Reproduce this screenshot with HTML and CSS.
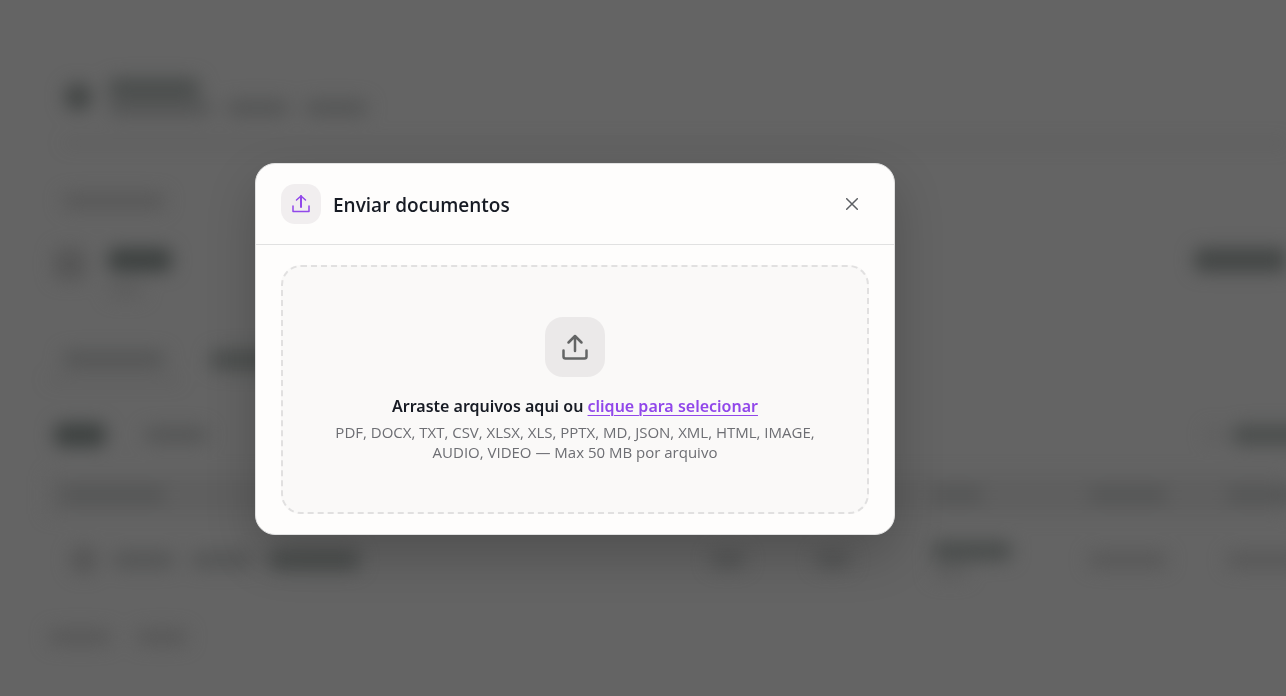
FILE: index.html
```html
<!DOCTYPE html>
<html lang="pt-BR">
<head>
<meta charset="utf-8">
<meta name="viewport" content="width=device-width, initial-scale=1">
<title>Enviar documentos</title>
<link rel="stylesheet" href="styles.css">
</head>
<body>
<div class="page" aria-hidden="true">
  <div class="page-header">
    <span class="dot dot-strong"></span>
    <div class="stack">
      <span class="bar strong w-90"></span>
      <div class="line"><span class="bar w-100"></span><span class="bar w-60"></span><span class="bar w-60"></span></div>
    </div>
  </div>
  <div class="crumbs"><span class="bar soft w-100"></span></div>
  <div class="heading">
    <span class="dot dot-large"></span>
    <div class="stack">
      <span class="bar darkest w-60"></span>
      <span class="bar faint w-36"></span>
    </div>
    <span class="action"></span>
  </div>
  <div class="tabs">
    <span class="tab"><span class="bar w-100"></span></span>
    <span class="bar strong w-90"></span>
  </div>
  <div class="filters">
    <span class="bar darkest w-48"></span>
    <span class="bar w-60"></span>
    <span class="search"><span class="bar faint w-16"></span><span class="bar strong w-90"></span></span>
  </div>
  <div class="table-row table-head">
    <span class="bar w-100"></span><span></span><span></span>
    <span class="bar w-48"></span><span class="bar w-80"></span><span class="bar w-80"></span>
  </div>
  <div class="table-row">
    <div class="line file"><span class="dot"></span><span class="bar w-60"></span><span class="bar w-60"></span><span class="bar strong w-90"></span></div>
    <span class="bar w-36"></span>
    <span class="bar w-36"></span>
    <div class="stack"><span class="bar strong w-80"></span><span class="bar faint w-36"></span></div>
    <span class="bar soft w-80"></span>
    <span class="bar soft w-80"></span>
  </div>
  <div class="footer"><span class="bar soft w-60"></span><span class="bar soft w-48"></span></div>
</div>

<div class="overlay">
  <section class="modal" role="dialog" aria-modal="true" aria-labelledby="modal-title">
    <header class="modal-header">
      <span class="badge">
        <svg width="20" height="20" viewBox="0 0 20 20" fill="none" stroke="currentColor" stroke-width="1.5" stroke-linecap="round" stroke-linejoin="round" aria-hidden="true"><path stroke-width="2" d="M10 13V2"/><path d="M5.500 6 10 2l4.500 4M2 12v5.500h16V12"/></svg>
      </span>
      <h1 class="modal-title" id="modal-title">Enviar documentos</h1>
      <button class="close" type="button" aria-label="Fechar">
        <svg width="12" height="12" viewBox="0 0 12 12" fill="none" stroke="currentColor" stroke-width="1.500" stroke-linecap="round" aria-hidden="true"><path d="m.7.700 10.600 10.600M11.300.700.700 11.300"/></svg>
      </button>
    </header>
    <div class="modal-body">
      <div class="dropzone">
        <span class="drop-icon">
          <svg width="28" height="28" viewBox="0 0 28 28" fill="none" stroke="currentColor" stroke-width="2.500" stroke-linecap="round" stroke-linejoin="round" aria-hidden="true"><path d="M14 18V3M7.500 9.500 14 3l6.500 6.500M2.500 17.500v6q0 2 2 2h19q2 0 2-2v-6"/></svg>
        </span>
        <p class="drop-title">Arraste arquivos aqui ou <a class="drop-link" href="#">clique para selecionar</a></p>
        <p class="drop-hint">PDF, DOCX, TXT, CSV, XLSX, XLS, PPTX, MD, JSON, XML, HTML, IMAGE, AUDIO, VIDEO — Max 50 MB por arquivo</p>
      </div>
    </div>
  </section>
</div>
</body>
</html>
```
FILE: styles.css
```css
* { box-sizing: border-box; }

body {
  margin: 0;
  min-height: 100vh;
  overflow: hidden;
  background: #646464;
  color: #171b24;
  font-family: "Segoe UI", "Open Sans", "Noto Sans", sans-serif;
}

/* Blurred page behind the dialog */
.page {
  display: flex;
  flex-direction: column;
  padding: 76px 0 0 48px;
  filter: blur(9px);
}

.bar {
  display: block;
  flex: none;
  height: 16px;
  border-radius: 8px;
  background: #545555;
}
.bar.strong { height: 20px; background: #4a4d4c; }
.bar.darkest { height: 24px; background: #3d4140; }
.bar.soft { background: #585858; }
.bar.faint { background: #5d5d5d; }

.w-16 { width: 16px; }
.w-36 { width: 36px; }
.w-48 { width: 52px; }
.w-60 { width: 64px; }
.w-80 { width: 80px; }
.w-90 { width: 92px; }
.w-100 { width: 104px; }

.dot {
  flex: none;
  width: 28px;
  height: 28px;
  border-radius: 50%;
  background: #565656;
}
.dot-strong { background: #434645; }
.dot-large { width: 32px; height: 32px; border-radius: 8px; }

.line { display: flex; align-items: center; gap: 14px; }
.stack { display: flex; flex-direction: column; gap: 2px; }

.page-header {
  display: flex;
  gap: 16px;
  align-items: center;
  height: 68px;
  margin-left: 16px;
  padding-bottom: 24px;
  border-bottom: 2px solid #505050;
}
.crumbs { padding: 49px 0 0 14px; }
.heading {
  display: flex;
  align-items: flex-start;
  gap: 22px;
  height: 64px;
  margin-top: 39px;
  padding-left: 6px;
}
.heading .stack { gap: 10px; }
.action {
  width: 92px;
  height: 24px;
  margin-left: auto;
  border-radius: 8px 0 0 8px;
  background: #434645;
}
.tabs {
  display: flex;
  align-items: center;
  gap: 30px;
  height: 40px;
  margin-top: 28px;
}
.tab { padding: 12px 14px; border-bottom: 2px solid #505050; }
.filters {
  display: flex;
  align-items: center;
  gap: 38px;
  height: 40px;
  margin-top: 35px;
  padding-left: 6px;
}
.search { display: flex; gap: 10px; align-items: center; margin-left: auto; width: 80px; }
.table-row {
  display: grid;
  grid-template-columns: 648px 105px 117px 156px 138px auto;
  align-items: center;
  height: 92px;
  padding-left: 14px;
}
.table-head { height: 38px; margin-top: 21px; background: #5f5f5f; }
.file { padding-left: 8px; }
.footer { display: flex; gap: 24px; padding-top: 23px; }

.overlay {
  position: fixed;
  inset: 0 136px 0 0;
  display: flex;
  align-items: center;
  justify-content: center;
  padding: 18px 16px 16px;
}
.modal {
  width: 640px;
  max-width: 100%;
  border: 1px solid #e1e1e1;
  border-radius: 20px;
  background: #fefdfc;
  box-shadow: 0 20px 50px rgba(0, 0, 0, 0.2);
}
.modal-header {
  display: flex;
  align-items: center;
  gap: 12px;
  padding: 20px 24px 20px 25px;
  border-bottom: 1px solid #e1e1e1;
}
.badge {
  display: grid;
  place-items: center;
  width: 40px;
  height: 40px;
  border-radius: 14px;
  background: #f1eeef;
  color: #9147ea;
}
.modal-title {
  flex: 1;
  margin: 0;
  padding-top: 2px;
  font-size: 19px;
  font-weight: 600;
  line-height: 28px;
}
.close {
  display: grid;
  place-items: center;
  width: 36px;
  height: 36px;
  padding: 0;
  border: 0;
  border-radius: 8px;
  background: transparent;
  color: #5c5f63;
  cursor: pointer;
}
.modal-body { padding: 20px 25px; }
.dropzone {
  display: flex;
  flex-direction: column;
  align-items: center;
  padding: 50px 48px;
  border: 2px dashed #e1e0e0;
  border-radius: 20px;
  background: #faf9f8;
  text-align: center;
}
.drop-icon {
  display: grid;
  place-items: center;
  width: 60px;
  height: 60px;
  margin-bottom: 16px;
  border-radius: 18px;
  background: #ebe9e9;
  color: #646565;
}
.drop-title {
  margin: 0 0 3px;
  font-family: "Segoe UI", "Noto Sans", sans-serif;
  font-size: 16px;
  font-weight: 600;
  line-height: 26px;
}
.drop-link {
  color: #9147ea;
  text-decoration: underline;
  text-decoration-thickness: 1px;
  text-underline-offset: 3px;
}
.drop-hint {
  margin: 0;
  color: #6d6e73;
  font-size: 15px;
  line-height: 20px;
}
```
